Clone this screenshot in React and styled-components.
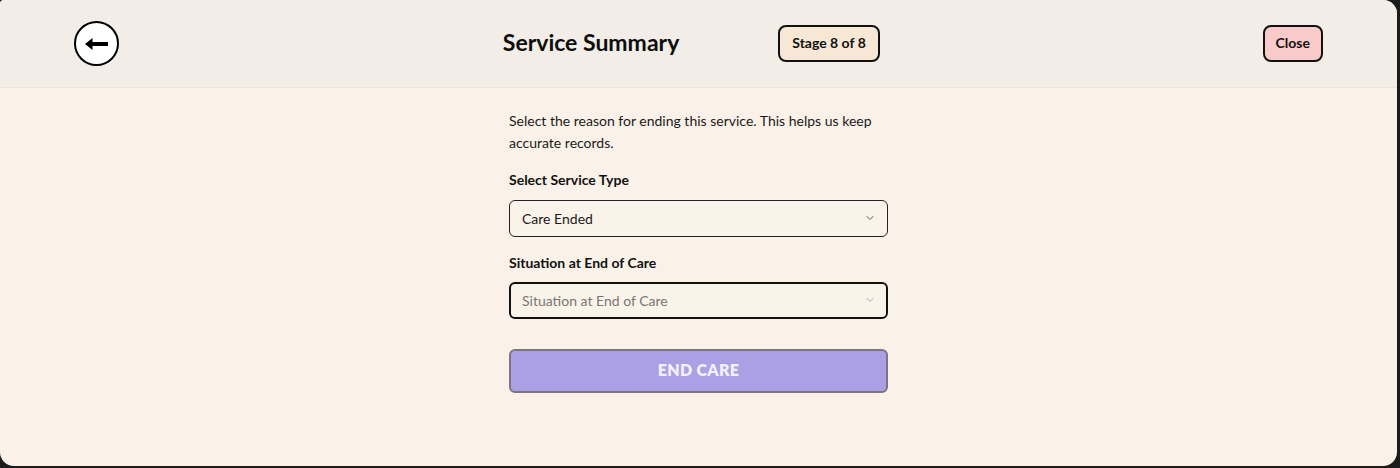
import React from "react";
import styled, { createGlobalStyle } from "styled-components";

const Global = createGlobalStyle`
  html, body { margin: 0; padding: 0; background: #1b1b1b; }
  body { font-family: "Lato", "Liberation Sans", sans-serif; color: #111; }
  * { box-sizing: border-box; }
`;

const Modal = styled.div`
  width: 1397px;
  height: 466px;
  background: #faf2e8;
  border-radius: 4px 14px 14px 14px;
  overflow: hidden;
  display: flex;
  flex-direction: column;
`;

const Header = styled.header`
  height: 88px;
  flex-shrink: 0;
  background: #f2ede6;
  border-bottom: 1px solid #ebe4da;
  display: flex;
  align-items: center;
  padding: 0 74px 0 74px;
`;

const BackButton = styled.button`
  width: 45px;
  height: 45px;
  border-radius: 50%;
  border: 2px solid #000;
  background: #fff;
  display: flex;
  align-items: center;
  justify-content: center;
  padding: 0;
  cursor: pointer;
`;

const Middle = styled.div`
  flex: 1;
  display: flex;
  align-items: center;
  justify-content: center;
  gap: 99px;
  padding-left: 1px;
`;

const Title = styled.h1`
  margin: 0;
  padding-bottom: 4px;
  font-size: 23px;
  font-weight: 700;
  color: #0d0d0d;
`;

const Pill = styled.div`
  height: 37px;
  display: flex;
  align-items: center;
  justify-content: center;
  padding: 0 ${(p) => p.$px}px 2px;
  border: 2px solid #111;
  border-radius: 8px;
  background: ${(p) => p.$bg};
  font-family: inherit;
  font-size: 14px;
  font-weight: 700;
  color: #111;
`;

const Body = styled.main`
  flex: 1;
  display: flex;
  justify-content: center;
  padding-top: 22px;
`;

const Form = styled.div`
  width: 379px;
  display: flex;
  flex-direction: column;
`;

const Description = styled.p`
  margin: 0;
  font-size: 14px;
  line-height: 22px;
  color: #1a1a1a;
`;

const Label = styled.div`
  margin-top: 16px;
  font-size: 14px;
  line-height: 20px;
  font-weight: 700;
  color: #111;
`;

const Select = styled.div`
  margin-top: ${(p) => (p.$focused ? 9 : 10)}px;
  height: 37px;
  border: ${(p) => (p.$focused ? "2px solid #111" : "1px solid #222")};
  border-radius: 6px;
  background: #faf3ea;
  display: flex;
  align-items: center;
  justify-content: space-between;
  padding: 0 ${(p) => (p.$focused ? 10 : 11)}px 1px ${(p) => (p.$focused ? 11 : 12)}px;
  font-size: 14px;
  color: ${(p) => (p.$placeholder ? "#7a7571" : "#1a1a1a")};
`;

const SubmitButton = styled.button`
  margin-top: 30px;
  height: 44px;
  padding: 0 0 4px;
  border: 2px solid #7d7680;
  border-radius: 6px;
  background: #aba0e3;
  color: #f3effb;
  font-family: inherit;
  font-size: 16px;
  font-weight: 800;
  letter-spacing: 0.3px;
  cursor: not-allowed;
`;

const Chevron = ({ color }) => (
  <svg width="12" height="12" viewBox="0 0 24 24" fill="none" stroke={color} strokeWidth="2" strokeLinecap="round" strokeLinejoin="round">
    <path d="M6 9l6 6 6-6" />
  </svg>
);

const BackArrow = () => (
  <svg width="25" height="14" viewBox="0 0 25 14">
    <path d="M1 7 L8.5 1 L8.5 5 L24 5 L24 9 L8.5 9 L8.5 13 Z" fill="#000" />
  </svg>
);

export default function App() {
  return (
    <>
      <Global />
      <Modal>
        <Header>
          <BackButton aria-label="Back">
            <BackArrow />
          </BackButton>
          <Middle>
            <Title>Service Summary</Title>
            <Pill $bg="#f6e8d5" $px={12}>Stage 8 of 8</Pill>
          </Middle>
          <Pill as="button" $bg="#f8caca" $px={11}>Close</Pill>
        </Header>
        <Body>
          <Form>
            <Description>
              Select the reason for ending this service. This helps us keep accurate records.
            </Description>
            <Label>Select Service Type</Label>
            <Select>
              <span>Care Ended</span>
              <Chevron color="#555" />
            </Select>
            <Label>Situation at End of Care</Label>
            <Select $focused $placeholder>
              <span>Situation at End of Care</span>
              <Chevron color="#aaa" />
            </Select>
            <SubmitButton disabled>END CARE</SubmitButton>
          </Form>
        </Body>
      </Modal>
    </>
  );
}
